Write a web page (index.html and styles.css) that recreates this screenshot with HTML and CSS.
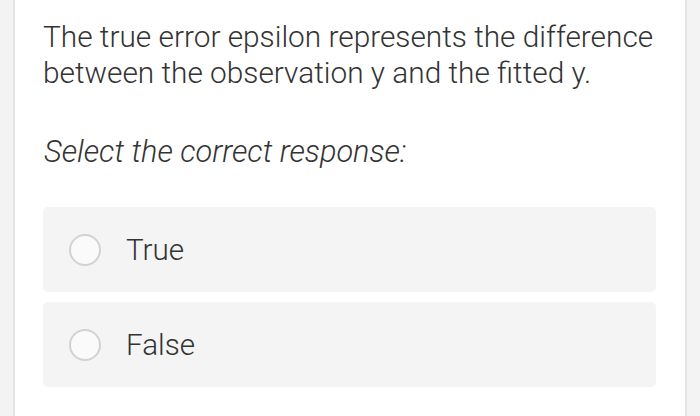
FILE: index.html
```html
<!DOCTYPE html>
<html>
<head>
<meta charset="utf-8">
<link rel="stylesheet" href="styles.css">
</head>
<body>
<div class="page">
  <p class="question">The true error epsilon represents the difference between the observation y and the fitted y.</p>
  <p class="prompt">Select the correct response:</p>
  <div class="options">
    <label class="option"><span class="radio"></span><span class="label">True</span></label>
    <label class="option"><span class="radio"></span><span class="label">False</span></label>
  </div>
</div>
</body>
</html>
```
FILE: styles.css
```css
html, body {
  margin: 0;
  padding: 0;
  height: 100%;
}
body {
  background: #f3f3f3;
  font-family: Roboto, "Liberation Sans", sans-serif;
  color: #333;
}
.page {
  margin: 0 13px;
  min-height: 100%;
  box-sizing: border-box;
  background: #fff;
  border-left: 2px solid #e4e4e4;
  border-right: 2px solid #e4e4e4;
  padding: 19px 29px 0 28px;
}
.question {
  margin: 0 -20px 0 0;
  font-size: 29.8px;
  line-height: 36px;
  font-weight: 300;
}
.prompt {
  margin: 43px 0 0 1px;
  font-size: 30.7px;
  line-height: 36px;
  font-weight: 300;
  font-style: italic;
}
.options {
  margin-top: 37px;
  display: flex;
  flex-direction: column;
  gap: 10px;
}
.option {
  display: flex;
  align-items: center;
  height: 85px;
  background: #f4f4f4;
  border-radius: 5px;
  padding-left: 26px;
}
.radio {
  width: 28px;
  height: 28px;
  border: 2px solid #d2d2d2;
  border-radius: 50%;
  background: #fafafa;
  flex: none;
}
.label {
  margin-left: 25px;
  font-size: 29.6px;
  font-weight: 300;
  color: #333;
}
```
